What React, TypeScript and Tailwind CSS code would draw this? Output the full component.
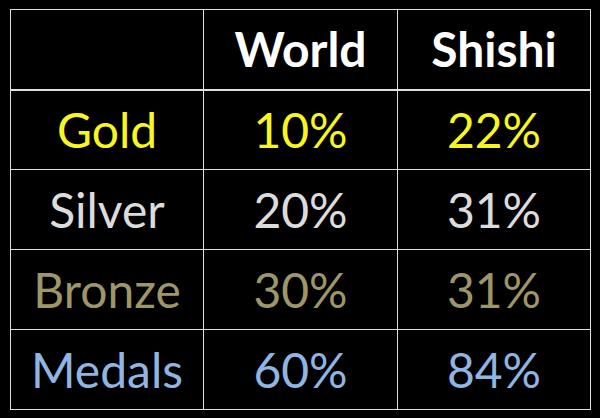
const rows = [
  { label: "Gold", world: "10%", shishi: "22%", color: "text-[#f7f71e]" },
  { label: "Silver", world: "20%", shishi: "31%", color: "text-[#dcdcdc]" },
  { label: "Bronze", world: "30%", shishi: "31%", color: "text-[#9d9668]" },
  { label: "Medals", world: "60%", shishi: "84%", color: "text-[#8fb5e2]" },
];

export default function App() {
  return (
    <div className="w-[600px] h-[418px] bg-black pl-[10px] pt-[9px] font-['Lato',sans-serif]">
      <table className="border-collapse table-fixed w-[580px] text-[48px] leading-none">
        <colgroup>
          <col className="w-[193px]" />
          <col className="w-[194px]" />
          <col className="w-[193px]" />
        </colgroup>
        <thead>
          <tr className="h-[80px] border-b-2 border-[#e0e0e0]">
            <th className="border border-[#e0e0e0]"></th>
            <th className="border border-[#e0e0e0] text-white font-bold">World</th>
            <th className="border border-[#e0e0e0] text-white font-bold">Shishi</th>
          </tr>
        </thead>
        <tbody>
          {rows.map((r) => (
            <tr key={r.label} className={`h-[80px] ${r.color}`}>
              <td className="border border-[#e0e0e0] text-center">{r.label}</td>
              <td className="border border-[#e0e0e0] text-center">{r.world}</td>
              <td className="border border-[#e0e0e0] text-center">{r.shishi}</td>
            </tr>
          ))}
        </tbody>
      </table>
    </div>
  );
}
